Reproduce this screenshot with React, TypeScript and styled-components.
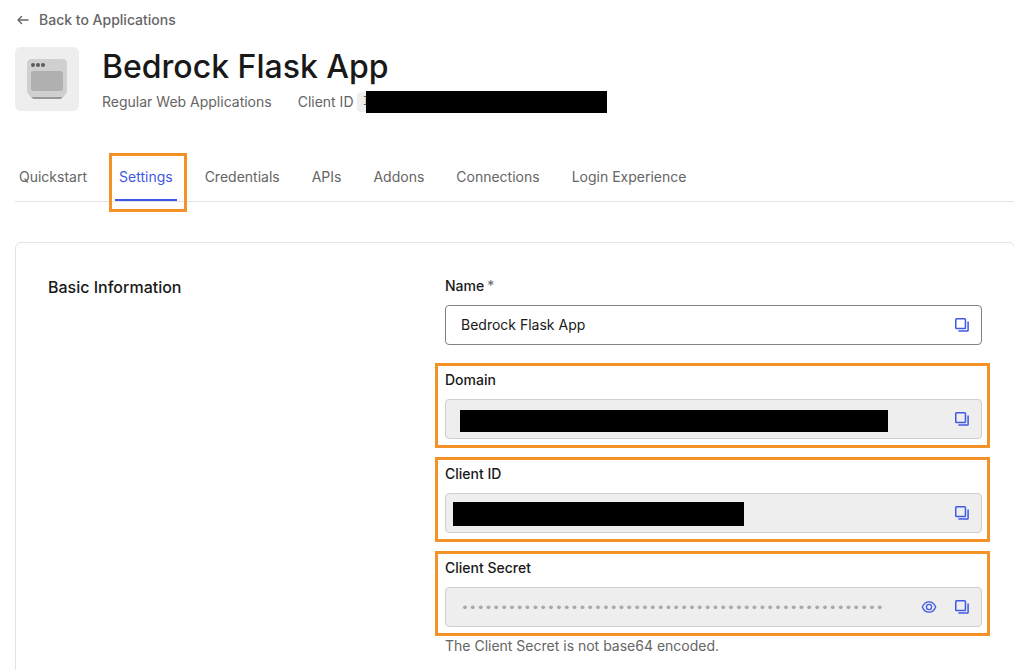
import React from "react";
import styled, { createGlobalStyle, css } from "styled-components";

const GlobalStyle = createGlobalStyle`
  *, *::before, *::after { box-sizing: border-box; }
  body {
    margin: 0;
    background: #fff;
    color: #191919;
    font-family: Inter, "Liberation Sans", sans-serif;
    font-size: 14px;
    line-height: 22px;
    overflow-x: hidden;
  }
`;

const orange = "#f39226";
const blue = "#3f59e4";
const muted = "#656565";

const Page = styled.main`
  padding: 9px 0 0 15px;
`;

const BackLink = styled.a`
  display: flex;
  align-items: center;
  gap: 8px;
  width: fit-content;
  color: ${muted};
  font-weight: 500;
  text-decoration: none;
`;

const Header = styled.header`
  display: flex;
  gap: 23px;
  margin-top: 16px;
`;

const AppTile = styled.div`
  display: flex;
  flex: none;
  align-items: center;
  justify-content: center;
  width: 64px;
  height: 64px;
  border-radius: 6px;
  background: #eee;
`;

const Title = styled.h1`
  margin: 0;
  font-size: 32px;
  font-weight: 500;
  line-height: 40px;
`;

const Meta = styled.div`
  display: flex;
  align-items: center;
  gap: 26px;
  margin-top: 4px;
  color: ${muted};
`;

const ClientId = styled.span`
  display: flex;
  align-items: center;
  gap: 4px;
`;

const Chip = styled.code`
  position: relative;
  width: 248px;
  padding: 0 5px;
  border-radius: 4px;
  background: #eee;
  font: 13px/20px "Liberation Mono", monospace;
`;

const Redaction = styled.span<{ $left: number; $top: number; $width: number; $height: number }>`
  position: absolute;
  left: ${(p) => p.$left}px;
  top: ${(p) => p.$top}px;
  width: ${(p) => p.$width}px;
  height: ${(p) => p.$height}px;
  background: #000;
`;

const Tabs = styled.nav`
  display: flex;
  gap: 24px;
  height: 49px;
  margin-top: 40px;
  border-bottom: 1px solid #e3e3e5;
`;

const Tab = styled.a<{ $active?: boolean }>`
  position: relative;
  padding: 13px 4px 0;
  color: ${muted};
  text-decoration: none;
  ${(p) =>
    p.$active &&
    css`
      color: ${blue};
      border-bottom: 2px solid ${blue};
      &::after {
        content: "";
        position: absolute;
        inset: 0 -10px -13px -6px;
        border: 3px solid ${orange};
      }
    `}
`;

const Card = styled.section`
  display: grid;
  grid-template-columns: 2fr 3fr;
  column-gap: 39px;
  margin: 40px -1px 0 0;
  padding: 32px;
  border: 1px solid #e3e3e5;
  border-radius: 6px;
`;

const SectionTitle = styled.h2`
  margin: 0;
  font-size: 16px;
  font-weight: 500;
  line-height: 24px;
`;

const Fields = styled.form`
  display: flex;
  flex-direction: column;
  gap: 24px;
`;

const Field = styled.div<{ $marked?: boolean }>`
  position: relative;
  display: flex;
  flex-direction: column;
  gap: 8px;
  ${(p) =>
    p.$marked &&
    css`
      &::after {
        content: "";
        position: absolute;
        inset: -6px -8px -9px -10px;
        border: 3px solid ${orange};
        pointer-events: none;
      }
    `}
`;

const Label = styled.label`
  font-weight: 500;
`;

const Required = styled.span`
  margin-left: 3px;
  color: ${muted};
  font-weight: 400;
`;

const InputBox = styled.div<{ $locked?: boolean }>`
  position: relative;
  display: flex;
  align-items: center;
  gap: 17px;
  height: 40px;
  padding: 0 11px 0 15px;
  border: 1px solid ${(p) => (p.$locked ? "#cfcfcf" : "#828282")};
  border-radius: 4px;
  background: ${(p) => (p.$locked ? "#eee" : "#fff")};
`;

const Input = styled.input`
  flex: 1;
  min-width: 0;
  padding: 0;
  border: 0;
  outline: 0;
  background: transparent;
  color: inherit;
  font: inherit;
  &[type="password"] {
    color: #a8a8a8;
    font: 13px "DejaVu Sans Mono", monospace;
  }
`;

const IconButton = styled.button`
  display: flex;
  flex: none;
  padding: 0;
  border: 0;
  background: transparent;
  color: ${blue};
  cursor: pointer;
`;

const Help = styled.p`
  margin: 0;
  color: ${muted};
`;

const SecretGroup = styled.div`
  display: flex;
  flex-direction: column;
  gap: 8px;
`;

const ArrowIcon = () => (
  <svg width="16" height="16" viewBox="0 0 16 16" fill="none" stroke="currentColor" strokeWidth="1.4" strokeLinecap="round" strokeLinejoin="round" aria-hidden="true">
    <path d="M13 8H3M6.5 4.5 3 8l3.5 3.5" />
  </svg>
);

const CopyIcon = () => (
  <svg width="16" height="16" viewBox="0 0 16 16" fill="none" stroke="currentColor" strokeWidth="1.5" aria-hidden="true">
    <rect x="1.75" y="1.75" width="9.7" height="9.7" rx="0.8" />
    <path d="M14.1 4.6v8.8a.7.7 0 0 1-.7.7H4.4" />
  </svg>
);

const EyeIcon = () => (
  <svg width="16" height="16" viewBox="0 0 16 16" fill="none" stroke="currentColor" strokeWidth="1.3" aria-hidden="true">
    <path d="M1.3 8C2.6 4.7 5.1 2.8 8 2.8s5.4 1.9 6.7 5.2c-1.3 3.3-3.8 5.2-6.7 5.2S2.6 11.3 1.3 8Z" />
    <circle cx="8" cy="8" r="2.6" />
  </svg>
);

const AppIcon = () => (
  <svg width="40" height="40" viewBox="0 0 40 40" aria-hidden="true">
    <path d="M1 34h38l-4 5q-1 1-2 1H7q-1 0-2-1Z" fill="#989898" />
    <path d="M5 0h30q5 0 5 5v27q0 1.5-1 2.500L36 38H4L1 34.500Q0 33.500 0 32V5q0-5 5-5Z" fill="#d0d0d0" />
    <rect x="4" y="12" width="32" height="20" rx="2.5" fill="#b0b0b0" />
    <g fill="#5c5c5c">
      <circle cx="6" cy="6" r="2" />
      <circle cx="11" cy="6" r="2" />
      <circle cx="16" cy="6" r="2" />
    </g>
  </svg>
);

const CopyButton = ({ of }: { of: string }) => (
  <IconButton type="button" aria-label={`Copy ${of}`}>
    <CopyIcon />
  </IconButton>
);

const tabs = ["Quickstart", "Settings", "Credentials", "APIs", "Addons", "Connections", "Login Experience"];

export default function App() {
  return (
    <Page>
      <GlobalStyle />
      <BackLink href="#applications">
        <ArrowIcon />
        Back to Applications
      </BackLink>
      <Header>
        <AppTile>
          <AppIcon />
        </AppTile>
        <div>
          <Title>Bedrock Flask App</Title>
          <Meta>
            <span>Regular Web Applications</span>
            <ClientId>
              Client ID
              <Chip>
                I
                <Redaction $left={9} $top={-1} $width={241} $height={22} />
              </Chip>
            </ClientId>
          </Meta>
        </div>
      </Header>
      <Tabs>
        {tabs.map((name) => (
          <Tab key={name} href={`#${name}`} $active={name === "Settings"}>
            {name}
          </Tab>
        ))}
      </Tabs>
      <Card>
        <SectionTitle>Basic Information</SectionTitle>
        <Fields>
          <Field>
            <Label htmlFor="name">
              Name
              <Required>*</Required>
            </Label>
            <InputBox>
              <Input id="name" defaultValue="Bedrock Flask App" />
              <CopyButton of="name" />
            </InputBox>
          </Field>
          <Field $marked>
            <Label htmlFor="domain">Domain</Label>
            <InputBox $locked>
              <Input id="domain" readOnly />
              <Redaction $left={14} $top={10} $width={428} $height={22} />
              <CopyButton of="domain" />
            </InputBox>
          </Field>
          <Field $marked>
            <Label htmlFor="client-id">Client ID</Label>
            <InputBox $locked>
              <Input id="client-id" readOnly />
              <Redaction $left={7} $top={8} $width={291} $height={24} />
              <CopyButton of="client ID" />
            </InputBox>
          </Field>
          <SecretGroup>
            <Field $marked>
              <Label htmlFor="client-secret">Client Secret</Label>
              <InputBox $locked>
                <Input id="client-secret" type="password" readOnly value={"x".repeat(54)} />
                <IconButton type="button" aria-label="Show client secret">
                  <EyeIcon />
                </IconButton>
                <CopyButton of="client secret" />
              </InputBox>
            </Field>
            <Help>The Client Secret is not base64 encoded.</Help>
          </SecretGroup>
        </Fields>
      </Card>
    </Page>
  );
}
